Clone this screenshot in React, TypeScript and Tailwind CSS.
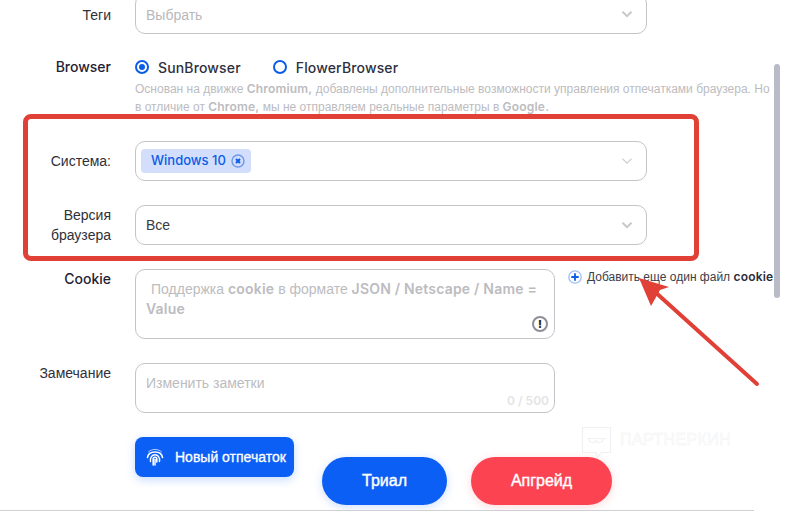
import React from "react";

const latin = "font-[Inter,sans-serif]";

function Chevron({ light }: { light?: boolean }) {
  return (
    <svg width="14" height="14" viewBox="0 0 14 14" fill="none" stroke={light ? "#d0d0d4" : "#c8c8cc"} strokeWidth={light ? 1.2 : 2} className="shrink-0">
      <path d="M2.5 4.8 7 9.2l4.5-4.4" />
    </svg>
  );
}

function Label({ children, strong }: { children: React.ReactNode; strong?: boolean }) {
  return (
    <div className={`w-[111px] shrink-0 text-right text-[14px] leading-[20px] ${strong ? "font-medium text-[#1f2233] font-[Inter,sans-serif]" : "text-[#2f3038]"}`}>
      {children}
    </div>
  );
}

function Select({ children, light }: { children: React.ReactNode; light?: boolean }) {
  return (
    <div className="ml-6 flex h-10 w-[512px] items-center justify-between rounded-[10px] border border-[#c4c4c8] bg-white pl-[5px] pr-[12px]">
      <div className="flex items-center">{children}</div>
      <Chevron light={light} />
    </div>
  );
}

function Radio({ on, label }: { on?: boolean; label: string }) {
  return (
    <div className="flex items-center gap-[9px]">
      <span className="flex h-[14px] w-[14px] items-center justify-center rounded-full border-2 border-[#0b5ce6]">
        {on && <span className="h-[6px] w-[6px] rounded-full bg-[#0b5ce6]" />}
      </span>
      <span className="font-[Inter,sans-serif] text-[14px] font-medium tracking-[0.15px] text-[#2e3040]">{label}</span>
    </div>
  );
}

function L({ children }: { children: React.ReactNode }) {
  return <b className="font-[Inter,sans-serif] font-semibold tracking-[0.2px]">{children}</b>;
}

function Fingerprint() {
  return (
    <svg width="20" height="20" viewBox="0 0 20 20" fill="none" stroke="white" strokeLinecap="round" className="shrink-0">
      <path d="M3.500 4.800C5.200 3.300 7.500 2.500 10 2.500s4.800.8 6.500 2.300" strokeWidth="1" opacity=".7" />
      <path d="M2.500 10.500C3 7 6.200 5 10 5s7 2 7.500 5.500" strokeWidth="1.600" />
      <path d="M5.500 14.500C4.900 10.500 7 7.800 10 7.800s5.100 2.700 4.500 6.700" strokeWidth="1.400" />
      <path d="M8.200 18v-6c0-1.200.7-1.800 1.800-1.800s1.800.6 1.800 1.800v3" strokeWidth="1.600" />
      <path d="M10 12.500V18" strokeWidth="1.500" />
    </svg>
  );
}

export default function App() {
  return (
    <div className="relative h-[511px] w-[788px] overflow-hidden bg-white font-['Liberation_Sans',sans-serif]">
      <div className="flex flex-col">
        <div className="-mt-[6px] flex items-center">
          <div className="pt-[2px]"><Label>Теги</Label></div>
          <Select>
            <span className="pl-[5px] pt-[2px] text-[14px] text-[#b8b8bc]">Выбрать</span>
          </Select>
        </div>

        <div className="mt-[23px] flex items-start">
          <Label strong>Browser</Label>
          <div className="ml-6 flex flex-col">
            <div className="flex h-5 items-center gap-[32px]">
              <Radio on label="SunBrowser" />
              <Radio label="FlowerBrowser" />
            </div>
            <p className="mt-[3px] whitespace-nowrap text-[12px] leading-[18px] text-[#bcbcc0]">
              Основан на движке <L>Chromium,</L> добавлены дополнительные возможности управления отпечатками браузера. Но
              <br />в отличие от <L>Chrome,</L> мы не отправляем реальные параметры в <L>Google.</L>
            </p>
          </div>
        </div>

        <div className="mt-[25px] flex items-center">
          <Label>Система:</Label>
          <Select light>
            <span className={`flex h-6 items-center gap-[5px] rounded-[4px] bg-[#d2defc] pl-[10px] pr-[6px] text-[13px] font-medium text-[#0b5ce6] ${latin}`}>
              Windows 10
              <svg width="14" height="14" viewBox="0 0 14 14" fill="none">
                <circle cx="7" cy="7" r="6" stroke="#6f97ea" strokeWidth="1.400" />
                <path d="M5 5l4 4M9 5l-4 4" stroke="#0b5ce6" strokeWidth="2" />
              </svg>
            </span>
          </Select>
        </div>

        <div className="mt-6 flex items-center">
          <Label>Версия<br />браузера</Label>
          <Select>
            <span className="pl-[5px] text-[14px] text-[#3a3a40]">Все</span>
          </Select>
        </div>

        <div className="mt-6 flex items-start">
          <Label strong>Cookie</Label>
          <div className="relative ml-6 h-[70px] w-[420px] rounded-[10px] border border-[#c4c4c8] px-[10px] py-[9px] text-[14px] leading-[20px] text-[#bcbcc0]">
            <span className="pl-[5px]">Поддержка <L>cookie</L> в формате <L>JSON / Netscape / Name =</L></span>
            <br />
            <L>Value</L>
            <span className={`absolute bottom-[6px] right-[6px] flex h-4 w-4 items-center justify-center rounded-full border-2 border-[#8d8f99] text-[11px] font-extrabold leading-none text-[#1e1e24] ${latin}`}>!</span>
          </div>
          <div className="ml-[13px] flex items-center gap-[5px] whitespace-nowrap text-[12px] leading-[16px] text-[#3c3d4a]">
            <svg width="14" height="14" viewBox="0 0 14 14" fill="none" className="shrink-0">
              <circle cx="7" cy="7" r="6.200" stroke="#9dbcf5" strokeWidth="1.300" />
              <path d="M3.300 7h7.400M7 3.300v7.400" stroke="#0b5ce6" strokeWidth="1.800" />
            </svg>
            <span>Добавить еще один файл <b className={`font-semibold tracking-[0.2px] text-[#2b2c3c] ${latin}`}>cookie</b></span>
          </div>
        </div>

        <div className="mt-6 flex items-start">
          <Label>Замечание</Label>
          <div className="relative ml-6 h-[50px] w-[420px] rounded-[10px] border border-[#c4c4c8] px-[10px] py-[9px] text-[14px] leading-[20px] text-[#bcbcc0]">
            Изменить заметки
            <span className={`absolute bottom-[3px] right-[5px] text-[12px] font-semibold leading-[16px] text-[#e4e4e6] ${latin}`}>0 / 500</span>
          </div>
        </div>

        <div className="ml-[135px] mt-6">
          <button className="flex h-10 w-[159px] items-center gap-[10px] whitespace-nowrap rounded-[8px] bg-[#0b5ff5] pl-[10px] text-[14px] text-white shadow-[0_3px_10px_rgba(11,95,245,0.22)] [-webkit-text-stroke:0.3px_white]">
            <Fingerprint />
            Новый отпечаток
          </button>
        </div>
      </div>

      <div className="absolute left-[322px] top-[457px] flex gap-6">
        <button className="h-12 w-[125px] rounded-full bg-[#0b5ff5] text-[16px] text-white shadow-[0_2px_10px_rgba(11,95,245,0.2)] [-webkit-text-stroke:0.4px_white]">Триал</button>
        <button className="h-12 w-[141px] rounded-full bg-[#fb4352] text-[16px] text-white shadow-[0_2px_10px_rgba(251,67,82,0.2)] [-webkit-text-stroke:0.4px_white]">Апгрейд</button>
      </div>

      <div className="absolute bottom-0 left-0 h-px w-[754px] bg-[#cfd0d4]" />
      <div className="absolute left-[774px] top-[64px] h-[234px] w-[6px] rounded-full bg-[#b9bcc8]" />

      <div className="absolute left-[581px] top-[426px] flex items-start gap-2">
        <svg width="31" height="33" viewBox="0 0 31 33" fill="none" stroke="#f1f1f1" strokeWidth="1.200">
          <path d="M1.500 1.500h28v25h-9l-4 5-1.500-5H1.500z" />
          <path d="M6 12.500h19M8 12.500c0 5 6 5 7 2 1 3 7 3 7-2" />
        </svg>
        <span className="mt-[4px] text-[16px] leading-[20px] tracking-[0.4px] text-white [-webkit-text-stroke:0.5px_#f1f1f1]">ПАРТНЕРКИН</span>
      </div>

      <div className="pointer-events-none absolute left-[23px] top-[114px] h-[147px] w-[676px] rounded-[8px] border-[5px] border-[#e04036]" />

      <svg className="pointer-events-none absolute left-0 top-0" width="788" height="511" fill="none">
        <path d="M757 384 654 291" stroke="#e04036" strokeWidth="4" strokeLinecap="round" />
        <path d="M639 278l30 9-9 3-9 16z" fill="#e04036" />
      </svg>
    </div>
  );
}
